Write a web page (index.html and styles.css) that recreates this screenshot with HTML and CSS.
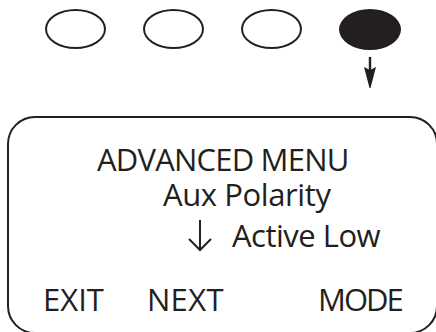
FILE: index.html
```html
<!DOCTYPE html>
<html lang="en">
<head>
    <meta charset="UTF-8">
    <title>Advanced Menu</title>
    <link rel="stylesheet" href="styles.css">
</head>
<body>
    <div class="keys">
        <div class="key"></div>
        <div class="key"></div>
        <div class="key"></div>
        <div class="key active"></div>
    </div>
    <div class="pointer">
        <svg width="14" height="31" viewBox="0 0 14 31">
            <line x1="7" y1="0" x2="7" y2="14" stroke="#231f20" stroke-width="2.4"/>
            <path d="M1 10 L7 13 L13 10 L7.5 31 L6.5 31 Z" fill="#231f20"/>
        </svg>
    </div>
    <div class="screen">
        <div class="line title">ADVANCED MENU</div>
        <div class="line param">Aux Polarity</div>
        <div class="line value">
            <svg class="down" width="24" height="32" viewBox="0 0 24 32">
                <line x1="12" y1="0" x2="12" y2="30" stroke="#231f20" stroke-width="2"/>
                <polyline points="1,19 12,30 23,19" fill="none" stroke="#231f20" stroke-width="2"/>
            </svg>
            <span>Active Low</span>
        </div>
        <div class="softkeys">
            <span class="exit">EXIT</span>
            <span class="next">NEXT</span>
            <span class="mode">MODE</span>
        </div>
    </div>
</body>
</html>
```

FILE: styles.css
```css
body {
    margin: 0;
    background: #fff;
    color: #231f20;
    font-family: "Open Sans", "Noto Sans", sans-serif;
    overflow: hidden;
    height: 332px;
}

.keys {
    display: flex;
    gap: 37px;
    padding: 9px 0 0 45px;
}

.key {
    width: 61px;
    height: 40px;
    box-sizing: border-box;
    border: 2.2px solid #231f20;
    border-radius: 50%;
}

.key.active {
    background: #231f20;
    width: 62px;
    height: 41px;
}

.pointer {
    padding: 7px 0 0 363px;
    height: 31px;
}

.pointer svg {
    display: block;
}

.screen {
    margin: 28px 0 0 7px;
    width: 431px;
    height: 218px;
    box-sizing: border-box;
    border: 2.2px solid #231f20;
    border-radius: 28px;
    padding-top: 26px;
}

.line {
    font-size: 31px;
    line-height: 31px;
    white-space: nowrap;
}

.title {
    padding-left: 88px;
    letter-spacing: -0.8px;
}

.param {
    margin-top: 4px;
    padding-left: 154px;
    letter-spacing: -0.4px;
}

.value {
    margin-top: 10px;
    padding-left: 179px;
    display: flex;
    align-items: flex-end;
    letter-spacing: -0.5px;
}

.value .down {
    display: block;
    margin-right: 20px;
    margin-bottom: -1px;
}

.softkeys {
    margin-top: 33px;
    display: flex;
    font-size: 31px;
    line-height: 31px;
    white-space: nowrap;
}

.exit {
    margin-left: 34px;
}

.next {
    margin-left: 43px;
    letter-spacing: 0.4px;
}

.mode {
    margin-left: 94px;
    letter-spacing: -2px;
}
```
